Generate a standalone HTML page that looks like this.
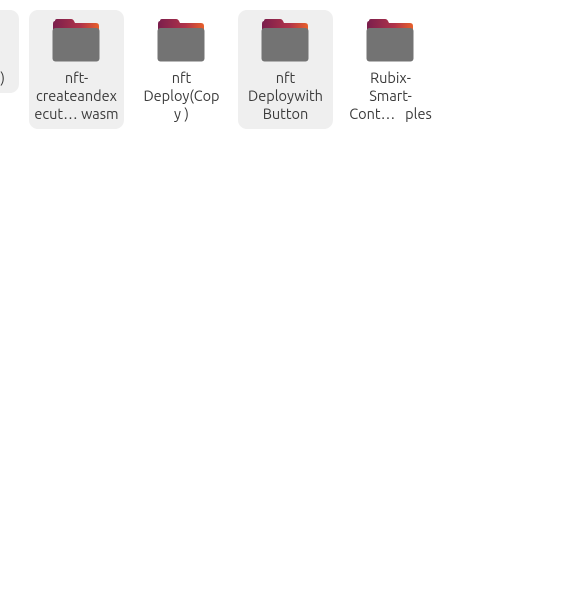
<!DOCTYPE html>
<html><head><meta charset="utf-8"><style>
body{margin:0;width:588px;height:589px;background:#fff;overflow:hidden;position:relative;font-family:"Ubuntu","Liberation Sans",sans-serif;}
.t{position:absolute;top:10px;width:95px;height:119px;border-radius:9px;}
.sel{background:#efefef;}
.f{position:absolute;left:23px;top:8px;width:48px;height:44px;}
.l{position:absolute;left:-5px;width:105px;top:59px;text-align:center;font-size:14.5px;line-height:18px;color:#3a3a3a;}
</style></head><body>
<div class="t sel" style="left:-76px;height:83px"><div class="l" style="top:59px;left:0;text-align:right;width:81px">)</div></div>
<div class="t sel" style="left:29px"><svg class="f" viewBox="0 0 48 44"><defs><linearGradient id="g" x1="0" x2="1"><stop offset="0" stop-color="#7a1e4c"/><stop offset="0.6" stop-color="#b0334a"/><stop offset="1" stop-color="#e8602a"/></linearGradient></defs><path d="M3 3Q3 1 5 1H19Q21 1 22 3L23 5H44Q47 5 47 8V20H1V6Q1 3 3 3Z" fill="url(#g)"/><rect x="0.5" y="10" width="47" height="33.5" rx="3" fill="#737373"/></svg><div class="l">nft-<br>createandex<br>ecut…&nbsp;wasm</div></div>
<div class="t" style="left:134px"><svg class="f" viewBox="0 0 48 44"><path d="M3 3Q3 1 5 1H19Q21 1 22 3L23 5H44Q47 5 47 8V20H1V6Q1 3 3 3Z" fill="url(#g)"/><rect x="0.5" y="10" width="47" height="33.5" rx="3" fill="#737373"/></svg><div class="l">nft<br>Deploy(Cop<br>y )</div></div>
<div class="t sel" style="left:238px"><svg class="f" viewBox="0 0 48 44"><path d="M3 3Q3 1 5 1H19Q21 1 22 3L23 5H44Q47 5 47 8V20H1V6Q1 3 3 3Z" fill="url(#g)"/><rect x="0.5" y="10" width="47" height="33.5" rx="3" fill="#737373"/></svg><div class="l">nft<br>Deploywith<br>Button</div></div>
<div class="t" style="left:343px"><svg class="f" viewBox="0 0 48 44"><path d="M3 3Q3 1 5 1H19Q21 1 22 3L23 5H44Q47 5 47 8V20H1V6Q1 3 3 3Z" fill="url(#g)"/><rect x="0.5" y="10" width="47" height="33.5" rx="3" fill="#737373"/></svg><div class="l">Rubix-<br>Smart-<br>Cont…&nbsp;&nbsp; ples</div></div>
</body></html>
